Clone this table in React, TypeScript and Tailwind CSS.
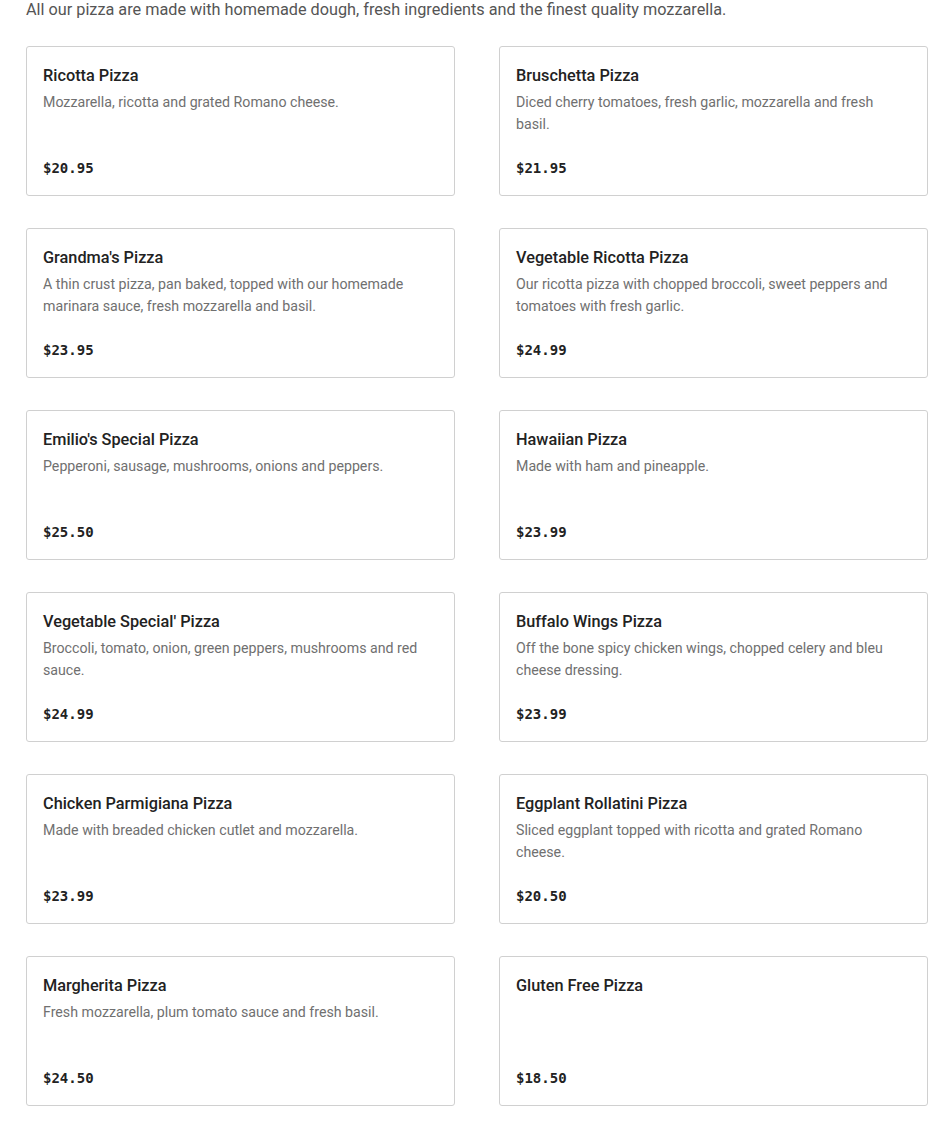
import React from "react";

const items = [
  ["Ricotta Pizza", "Mozzarella, ricotta and grated Romano cheese.", "$20.95"],
  ["Bruschetta Pizza", "Diced cherry tomatoes, fresh garlic, mozzarella and fresh basil.", "$21.95"],
  ["Grandma's Pizza", "A thin crust pizza, pan baked, topped with our homemade marinara sauce, fresh mozzarella and basil.", "$23.95"],
  ["Vegetable Ricotta Pizza", "Our ricotta pizza with chopped broccoli, sweet peppers and tomatoes with fresh garlic.", "$24.99"],
  ["Emilio's Special Pizza", "Pepperoni, sausage, mushrooms, onions and peppers.", "$25.50"],
  ["Hawaiian Pizza", "Made with ham and pineapple.", "$23.99"],
  ["Vegetable Special' Pizza", "Broccoli, tomato, onion, green peppers, mushrooms and red sauce.", "$24.99"],
  ["Buffalo Wings Pizza", "Off the bone spicy chicken wings, chopped celery and bleu cheese dressing.", "$23.99"],
  ["Chicken Parmigiana Pizza", "Made with breaded chicken cutlet and mozzarella.", "$23.99"],
  ["Eggplant Rollatini Pizza", "Sliced eggplant topped with ricotta and grated Romano cheese.", "$20.50"],
  ["Margherita Pizza", "Fresh mozzarella, plum tomato sauce and fresh basil.", "$24.50"],
  ["Gluten Free Pizza", "", "$18.50"],
];

export default function App() {
  return (
    <div className="bg-white min-h-[1128px] pl-[26px] pr-[22px] font-['Roboto','Liberation_Sans',sans-serif]">
      <p className="text-[16.25px] leading-5 text-[#555555]">
        All our pizza are made with homemade dough, fresh ingredients and the finest quality mozzarella.
      </p>
      <div className="mt-[26px] grid grid-cols-[429px_429px] gap-x-[44px] gap-y-[32px]">
        {items.map(([name, desc, price]) => (
          <div
            key={name}
            className="h-[150px] border border-[#d0d0d0] rounded-[3px] px-4 pt-[17px] pb-[15px] flex flex-col"
          >
            <div className="text-[16.3px] leading-6 font-medium text-[#222222]">{name}</div>
            {desc ? (
              <div className="mt-[3px] max-w-[382px] text-[14.2px] leading-[22px] text-[#707070]">{desc}</div>
            ) : null}
            <div className="mt-auto text-[14px] leading-6 font-bold text-[#222222] font-['DejaVu_Sans_Mono',monospace]">
              {price}
            </div>
          </div>
        ))}
      </div>
    </div>
  );
}
